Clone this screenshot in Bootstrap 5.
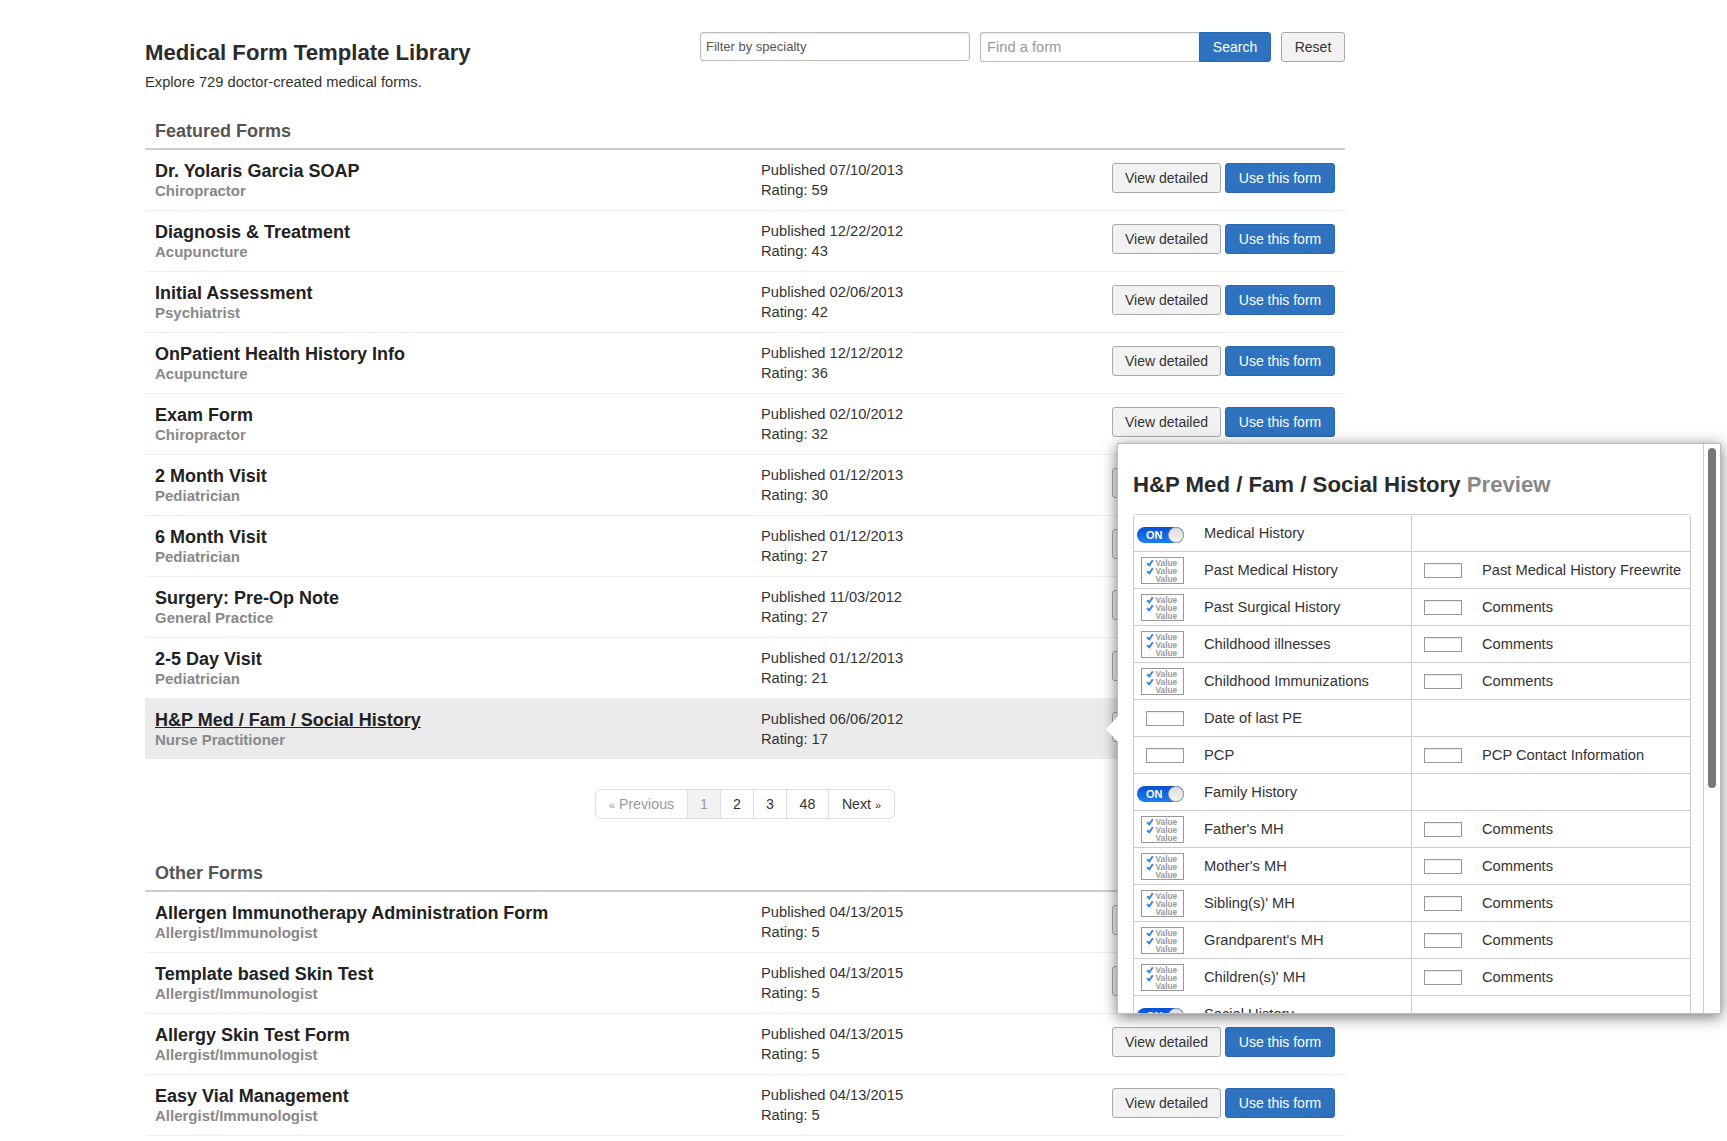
<!DOCTYPE html>
<html lang="en">
<head>
<meta charset="utf-8">
<title>Medical Form Template Library</title>
<link href="https://cdn.jsdelivr.net/npm/bootstrap@5.3.0/dist/css/bootstrap.min.css" rel="stylesheet">
<style>
html,body{height:1141px;overflow:hidden;background:#fff;}
body{font-family:"Liberation Sans",Arial,sans-serif;font-size:14.7px;line-height:20px;color:#333;position:relative;}
.lib-page{width:1200px;margin-left:145px;padding-top:32px;}
.lib-head{height:74px;}
.lib-title{font-size:22.15px;line-height:30px;font-weight:700;color:#2b2b2b;margin:6px 0 4px;}
.lib-intro{margin:0;color:#333;}
.lib-tools{gap:10px;margin-right:0;}
.spec-input{width:270px;height:29px;border:1px solid #bbb;border-radius:3px;font-size:13px;color:#555;padding:0 5px;line-height:27px;box-shadow:inset 0 1px 2px rgba(0,0,0,.12);background:#fff;}
.find-wrap{width:291px;height:30px;}
.find-input{flex:1;height:30px;border:1px solid #bbb;border-right:0;border-radius:3px 0 0 3px;font-size:14.7px;color:#999;padding:0 6px;line-height:28px;box-shadow:inset 0 1px 2px rgba(0,0,0,.1);}
.btn.tool-btn{height:30px;padding:0;font-size:14px;line-height:28px;border-radius:3px;}
.btn.btn-blue{background:#2f72bf;border:1px solid #2a69b2;color:#fff;}
.find-wrap .btn-blue{border-radius:0 3px 3px 0;width:72px;}
.btn.btn-grey{background:#f2f2f2;border:1px solid #aaa;color:#333;}
.btn.reset-btn{width:64px;}
.sect-head{font-size:18px;line-height:24px;font-weight:700;color:#555;margin:0;padding:0 10px 5px;border-bottom:2px solid #ccc;}
.sect-first{margin-top:13px;}
.sect-other{margin-top:42px;}
.form-row{height:61px;padding:10px 10px 0;border-bottom:1px solid #eee;}
.form-row.is-hover{background:#ebebeb;border-bottom-color:#fff;background-clip:padding-box;}
.form-main{width:606px;padding-top:1px;}
.form-name{display:block;font-size:18px;line-height:20px;font-weight:700;color:#222;text-decoration:none;}
.is-hover .form-name{text-decoration:underline;}
.form-spec{display:block;font-size:15px;line-height:20px;font-weight:700;color:#888;}
.form-meta{flex:1;color:#333;}
.form-acts{gap:4px;margin-top:3px;}
.btn.act-btn{height:30px;font-size:14px;line-height:28px;padding:0;border-radius:3px;}
.btn.act-view{width:109px;}
.btn.act-use{width:110px;}
.pager-wrap{margin-top:29px;}
.pagination{margin:0;}
.pagination .page-link{font-size:14.2px;line-height:28px;height:30px;padding:0;text-align:center;color:#333;border-color:#ddd;background:#fff;}
.pagination .page-item.disabled .page-link{color:#999;background:#fff;}
.pagination .page-item.active .page-link{color:#999;background:#f2f2f2;border-color:#ddd;}
.pg-prev{width:93px;}
.pg-num{width:34px;}
.pg-48{width:43px;}
.pg-next{width:67px;}
.pg-mark{font-size:11px;}
.form-pop{position:absolute;left:1117px;top:443px;width:604px;height:571px;background:#fff;border:1px solid #bbb;box-shadow:0 3px 14px rgba(0,0,0,.55);}
.pop-clip{height:569px;overflow:hidden;padding:0 32px 0 15px;}
.pop-title{font-size:22.2px;line-height:30px;font-weight:700;color:#2b2b2b;margin:26px 0 14px;white-space:nowrap;}
.pop-title span{color:#888;}
.pop-arrow{position:absolute;left:-12px;top:272px;width:0;height:0;border-style:solid;border-width:13px 12px 13px 0;border-color:transparent #fff transparent transparent;}
.pop-track{position:absolute;right:0;top:0;bottom:0;width:17px;background:#fff;border-left:1px solid #ccc;}
.pop-thumb{position:absolute;left:4px;top:4px;width:8px;height:340px;border-radius:4px;background:#777;}
.pop-table{table-layout:fixed;width:555px;margin:0;border-collapse:separate;border-spacing:0;border:1px solid #ccc;border-bottom:0;border-radius:3px 3px 0 0;}
.pop-table td{width:278px;height:37px;padding:0;border-bottom:1px solid #ccc;border-right:1px solid #ccc;vertical-align:middle;color:#333;white-space:nowrap;background:#fff;}
.pop-table td:last-child{border-right:0;}
.pop-cell{height:36px;}
.pop-ico{width:50px;flex:none;margin-right:20px;}
.tog{position:relative;display:block;width:47px;height:16px;border-radius:8px;background:linear-gradient(#0a4fd0,#1a80f0);color:#fff;font-size:11px;line-height:16px;font-weight:700;padding-left:9px;margin-top:4px;}
.tog::after{content:"";position:absolute;right:0;top:0;width:16px;height:16px;border-radius:50%;background:linear-gradient(#ddd,#f4f4f4);border:1px solid #aaa;}
.txt-ico{display:block;width:38px;height:15px;border:1px solid #999;background:#fff;box-shadow:inset 0 1px 1px rgba(0,0,0,.08);}
.chk-ico{display:block;width:43px;height:27px;border:1px solid #999;background:#fff;padding-top:1px;}
.chk-line{position:relative;display:block;height:8px;line-height:8px;font-size:8.3px;font-weight:700;color:#999;padding-left:13.5px;white-space:nowrap;}
.chk-on::before{content:"";position:absolute;left:6px;top:0;width:4px;height:7px;border:solid #3b86e0;border-width:0 2px 2px 0;transform:rotate(35deg);}
</style>
</head>
<body>
<main class="lib-page">
  <header class="lib-head d-flex justify-content-between align-items-start">
    <div>
      <h1 class="lib-title">Medical Form Template Library</h1>
      <p class="lib-intro">Explore 729 doctor-created medical forms.</p>
    </div>
    <div class="lib-tools d-flex align-items-start">
      <div class="spec-input">Filter by specialty</div>
      <div class="find-wrap d-flex">
        <div class="find-input">Find a form</div>
        <button class="btn tool-btn btn-blue" type="button">Search</button>
      </div>
      <button class="btn tool-btn reset-btn btn-grey" type="button">Reset</button>
    </div>
  </header>

  <h2 class="sect-head sect-first">Featured Forms</h2>
  <div class="form-row d-flex align-items-start"><div class="form-main"><a class="form-name" href="#">Dr. Yolaris Garcia SOAP</a><span class="form-spec">Chiropractor</span></div><div class="form-meta">Published 07/10/2013<br>Rating: 59</div><div class="form-acts d-flex"><button class="btn act-btn act-view btn-grey" type="button">View detailed</button><button class="btn act-btn act-use btn-blue" type="button">Use this form</button></div></div>
  <div class="form-row d-flex align-items-start"><div class="form-main"><a class="form-name" href="#">Diagnosis &amp; Treatment</a><span class="form-spec">Acupuncture</span></div><div class="form-meta">Published 12/22/2012<br>Rating: 43</div><div class="form-acts d-flex"><button class="btn act-btn act-view btn-grey" type="button">View detailed</button><button class="btn act-btn act-use btn-blue" type="button">Use this form</button></div></div>
  <div class="form-row d-flex align-items-start"><div class="form-main"><a class="form-name" href="#">Initial Assessment</a><span class="form-spec">Psychiatrist</span></div><div class="form-meta">Published 02/06/2013<br>Rating: 42</div><div class="form-acts d-flex"><button class="btn act-btn act-view btn-grey" type="button">View detailed</button><button class="btn act-btn act-use btn-blue" type="button">Use this form</button></div></div>
  <div class="form-row d-flex align-items-start"><div class="form-main"><a class="form-name" href="#">OnPatient Health History Info</a><span class="form-spec">Acupuncture</span></div><div class="form-meta">Published 12/12/2012<br>Rating: 36</div><div class="form-acts d-flex"><button class="btn act-btn act-view btn-grey" type="button">View detailed</button><button class="btn act-btn act-use btn-blue" type="button">Use this form</button></div></div>
  <div class="form-row d-flex align-items-start"><div class="form-main"><a class="form-name" href="#">Exam Form</a><span class="form-spec">Chiropractor</span></div><div class="form-meta">Published 02/10/2012<br>Rating: 32</div><div class="form-acts d-flex"><button class="btn act-btn act-view btn-grey" type="button">View detailed</button><button class="btn act-btn act-use btn-blue" type="button">Use this form</button></div></div>
  <div class="form-row d-flex align-items-start"><div class="form-main"><a class="form-name" href="#">2 Month Visit</a><span class="form-spec">Pediatrician</span></div><div class="form-meta">Published 01/12/2013<br>Rating: 30</div><div class="form-acts d-flex"><button class="btn act-btn act-view btn-grey" type="button">View detailed</button><button class="btn act-btn act-use btn-blue" type="button">Use this form</button></div></div>
  <div class="form-row d-flex align-items-start"><div class="form-main"><a class="form-name" href="#">6 Month Visit</a><span class="form-spec">Pediatrician</span></div><div class="form-meta">Published 01/12/2013<br>Rating: 27</div><div class="form-acts d-flex"><button class="btn act-btn act-view btn-grey" type="button">View detailed</button><button class="btn act-btn act-use btn-blue" type="button">Use this form</button></div></div>
  <div class="form-row d-flex align-items-start"><div class="form-main"><a class="form-name" href="#">Surgery: Pre-Op Note</a><span class="form-spec">General Practice</span></div><div class="form-meta">Published 11/03/2012<br>Rating: 27</div><div class="form-acts d-flex"><button class="btn act-btn act-view btn-grey" type="button">View detailed</button><button class="btn act-btn act-use btn-blue" type="button">Use this form</button></div></div>
  <div class="form-row d-flex align-items-start"><div class="form-main"><a class="form-name" href="#">2-5 Day Visit</a><span class="form-spec">Pediatrician</span></div><div class="form-meta">Published 01/12/2013<br>Rating: 21</div><div class="form-acts d-flex"><button class="btn act-btn act-view btn-grey" type="button">View detailed</button><button class="btn act-btn act-use btn-blue" type="button">Use this form</button></div></div>
  <div class="form-row is-hover d-flex align-items-start"><div class="form-main"><a class="form-name" href="#">H&amp;P Med / Fam / Social History</a><span class="form-spec">Nurse Practitioner</span></div><div class="form-meta">Published 06/06/2012<br>Rating: 17</div><div class="form-acts d-flex"><button class="btn act-btn act-view btn-grey" type="button">View detailed</button><button class="btn act-btn act-use btn-blue" type="button">Use this form</button></div></div>

  <nav class="pager-wrap d-flex justify-content-center" aria-label="Pages">
    <ul class="pagination">
      <li class="page-item disabled"><span class="page-link pg-prev"><span class="pg-mark">«</span> Previous</span></li>
      <li class="page-item active"><span class="page-link pg-num">1</span></li>
      <li class="page-item"><a class="page-link pg-num" href="#">2</a></li>
      <li class="page-item"><a class="page-link pg-num" href="#">3</a></li>
      <li class="page-item"><a class="page-link pg-48" href="#">48</a></li>
      <li class="page-item"><a class="page-link pg-next" href="#">Next <span class="pg-mark">»</span></a></li>
    </ul>
  </nav>

  <h2 class="sect-head sect-other">Other Forms</h2>
  <div class="form-row d-flex align-items-start"><div class="form-main"><a class="form-name" href="#">Allergen Immunotherapy Administration Form</a><span class="form-spec">Allergist/Immunologist</span></div><div class="form-meta">Published 04/13/2015<br>Rating: 5</div><div class="form-acts d-flex"><button class="btn act-btn act-view btn-grey" type="button">View detailed</button><button class="btn act-btn act-use btn-blue" type="button">Use this form</button></div></div>
  <div class="form-row d-flex align-items-start"><div class="form-main"><a class="form-name" href="#">Template based Skin Test</a><span class="form-spec">Allergist/Immunologist</span></div><div class="form-meta">Published 04/13/2015<br>Rating: 5</div><div class="form-acts d-flex"><button class="btn act-btn act-view btn-grey" type="button">View detailed</button><button class="btn act-btn act-use btn-blue" type="button">Use this form</button></div></div>
  <div class="form-row d-flex align-items-start"><div class="form-main"><a class="form-name" href="#">Allergy Skin Test Form</a><span class="form-spec">Allergist/Immunologist</span></div><div class="form-meta">Published 04/13/2015<br>Rating: 5</div><div class="form-acts d-flex"><button class="btn act-btn act-view btn-grey" type="button">View detailed</button><button class="btn act-btn act-use btn-blue" type="button">Use this form</button></div></div>
  <div class="form-row d-flex align-items-start"><div class="form-main"><a class="form-name" href="#">Easy Vial Management</a><span class="form-spec">Allergist/Immunologist</span></div><div class="form-meta">Published 04/13/2015<br>Rating: 5</div><div class="form-acts d-flex"><button class="btn act-btn act-view btn-grey" type="button">View detailed</button><button class="btn act-btn act-use btn-blue" type="button">Use this form</button></div></div>
</main>

<aside class="form-pop">
  <span class="pop-arrow"></span>
  <div class="pop-clip">
    <h3 class="pop-title">H&amp;P Med / Fam / Social History <span>Preview</span></h3>
    <table class="pop-table">
      <tbody>
      <tr><td><div class="pop-cell d-flex align-items-center"><div class="pop-ico d-flex justify-content-end"><span class="tog">ON</span></div>Medical History</div></td><td></td></tr>
      <tr><td><div class="pop-cell d-flex align-items-center"><div class="pop-ico d-flex justify-content-end"><span class="chk-ico"><span class="chk-line chk-on">Value</span><span class="chk-line chk-on">Value</span><span class="chk-line">Value</span></span></div>Past Medical History</div></td><td><div class="pop-cell d-flex align-items-center"><div class="pop-ico d-flex justify-content-end"><span class="txt-ico"></span></div>Past Medical History Freewrite</div></td></tr>
      <tr><td><div class="pop-cell d-flex align-items-center"><div class="pop-ico d-flex justify-content-end"><span class="chk-ico"><span class="chk-line chk-on">Value</span><span class="chk-line chk-on">Value</span><span class="chk-line">Value</span></span></div>Past Surgical History</div></td><td><div class="pop-cell d-flex align-items-center"><div class="pop-ico d-flex justify-content-end"><span class="txt-ico"></span></div>Comments</div></td></tr>
      <tr><td><div class="pop-cell d-flex align-items-center"><div class="pop-ico d-flex justify-content-end"><span class="chk-ico"><span class="chk-line chk-on">Value</span><span class="chk-line chk-on">Value</span><span class="chk-line">Value</span></span></div>Childhood illnesses</div></td><td><div class="pop-cell d-flex align-items-center"><div class="pop-ico d-flex justify-content-end"><span class="txt-ico"></span></div>Comments</div></td></tr>
      <tr><td><div class="pop-cell d-flex align-items-center"><div class="pop-ico d-flex justify-content-end"><span class="chk-ico"><span class="chk-line chk-on">Value</span><span class="chk-line chk-on">Value</span><span class="chk-line">Value</span></span></div>Childhood Immunizations</div></td><td><div class="pop-cell d-flex align-items-center"><div class="pop-ico d-flex justify-content-end"><span class="txt-ico"></span></div>Comments</div></td></tr>
      <tr><td><div class="pop-cell d-flex align-items-center"><div class="pop-ico d-flex justify-content-end"><span class="txt-ico"></span></div>Date of last PE</div></td><td></td></tr>
      <tr><td><div class="pop-cell d-flex align-items-center"><div class="pop-ico d-flex justify-content-end"><span class="txt-ico"></span></div>PCP</div></td><td><div class="pop-cell d-flex align-items-center"><div class="pop-ico d-flex justify-content-end"><span class="txt-ico"></span></div>PCP Contact Information</div></td></tr>
      <tr><td><div class="pop-cell d-flex align-items-center"><div class="pop-ico d-flex justify-content-end"><span class="tog">ON</span></div>Family History</div></td><td></td></tr>
      <tr><td><div class="pop-cell d-flex align-items-center"><div class="pop-ico d-flex justify-content-end"><span class="chk-ico"><span class="chk-line chk-on">Value</span><span class="chk-line chk-on">Value</span><span class="chk-line">Value</span></span></div>Father's MH</div></td><td><div class="pop-cell d-flex align-items-center"><div class="pop-ico d-flex justify-content-end"><span class="txt-ico"></span></div>Comments</div></td></tr>
      <tr><td><div class="pop-cell d-flex align-items-center"><div class="pop-ico d-flex justify-content-end"><span class="chk-ico"><span class="chk-line chk-on">Value</span><span class="chk-line chk-on">Value</span><span class="chk-line">Value</span></span></div>Mother's MH</div></td><td><div class="pop-cell d-flex align-items-center"><div class="pop-ico d-flex justify-content-end"><span class="txt-ico"></span></div>Comments</div></td></tr>
      <tr><td><div class="pop-cell d-flex align-items-center"><div class="pop-ico d-flex justify-content-end"><span class="chk-ico"><span class="chk-line chk-on">Value</span><span class="chk-line chk-on">Value</span><span class="chk-line">Value</span></span></div>Sibling(s)' MH</div></td><td><div class="pop-cell d-flex align-items-center"><div class="pop-ico d-flex justify-content-end"><span class="txt-ico"></span></div>Comments</div></td></tr>
      <tr><td><div class="pop-cell d-flex align-items-center"><div class="pop-ico d-flex justify-content-end"><span class="chk-ico"><span class="chk-line chk-on">Value</span><span class="chk-line chk-on">Value</span><span class="chk-line">Value</span></span></div>Grandparent's MH</div></td><td><div class="pop-cell d-flex align-items-center"><div class="pop-ico d-flex justify-content-end"><span class="txt-ico"></span></div>Comments</div></td></tr>
      <tr><td><div class="pop-cell d-flex align-items-center"><div class="pop-ico d-flex justify-content-end"><span class="chk-ico"><span class="chk-line chk-on">Value</span><span class="chk-line chk-on">Value</span><span class="chk-line">Value</span></span></div>Children(s)' MH</div></td><td><div class="pop-cell d-flex align-items-center"><div class="pop-ico d-flex justify-content-end"><span class="txt-ico"></span></div>Comments</div></td></tr>
      <tr><td><div class="pop-cell d-flex align-items-center"><div class="pop-ico d-flex justify-content-end"><span class="tog">ON</span></div>Social History</div></td><td></td></tr>
      </tbody>
    </table>
  </div>
  <div class="pop-track"><div class="pop-thumb"></div></div>
</aside>
<script src="https://cdn.jsdelivr.net/npm/bootstrap@5.3.0/dist/js/bootstrap.bundle.min.js"></script>
</body>
</html>
